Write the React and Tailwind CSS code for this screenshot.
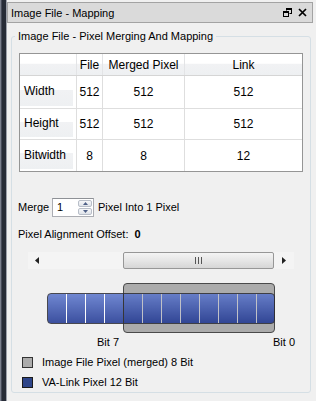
import React from "react";

const headerBg =
  "bg-[linear-gradient(to_bottom,#ffffff_0%,#ffffff_45%,#f1f2f4_46%,#eef0f2_100%)]";

const rows = [
  { label: "Width", file: "512", merged: "512", link: "512", h: "h-[33px]" },
  { label: "Height", file: "512", merged: "512", link: "512", h: "h-[31px]" },
  { label: "Bitwidth", file: "8", merged: "8", link: "12", h: "h-[31px]" },
];

const RestoreIcon = () => (
  <svg width="9" height="9" viewBox="0 0 9 9" className="block">
    <path d="M3 0h6v6h-2.5v-1h1.5v-3h-4v0.5h-1z" fill="#000" />
    <path d="M0 3h6v6h-6z M1 5v3h4v-3z" fill="#000" fillRule="evenodd" />
  </svg>
);

const CloseIcon = () => (
  <svg width="9" height="9" viewBox="0 0 9 9" className="block">
    <path d="M1 1L8 8M8 1L1 8" stroke="#000" strokeWidth="1.7" />
  </svg>
);

const SpinBox = () => (
  <div className="flex h-[19px] w-[42px] border border-[#abadb3] border-t-[#8e9196] bg-white">
    <div className="flex-1 pl-[4px] leading-[17px]">1</div>
    <div className="flex flex-col w-[15px] py-px pr-px gap-px">
      <div className="flex-1 flex items-center justify-center border border-[#b8bec8] rounded-[2px] bg-[linear-gradient(to_bottom,#f6f7f9,#dfe3e9)]">
        <svg width="5" height="3" viewBox="0 0 5 3">
          <path d="M0 3L2.5 0L5 3z" fill="#4d5f86" />
        </svg>
      </div>
      <div className="flex-1 flex items-center justify-center border border-[#b8bec8] rounded-[2px] bg-[linear-gradient(to_bottom,#f6f7f9,#dfe3e9)]">
        <svg width="5" height="3" viewBox="0 0 5 3">
          <path d="M0 0L2.5 3L5 0z" fill="#4d5f86" />
        </svg>
      </div>
    </div>
  </div>
);

const ScrollBar = () => (
  <div className="mx-[9px] h-[17px] flex bg-[#f4f4f4]">
    <div className="w-[17px] flex items-center justify-center">
      <svg width="4" height="7" viewBox="0 0 4 7">
        <path d="M4 0L0 3.5L4 7z" fill="#222" />
      </svg>
    </div>
    <div className="w-[78px]" />
    <div className="w-[151px] border border-[#979797] rounded-[2px] bg-[linear-gradient(to_bottom,#f4f4f4,#e6e6e6_50%,#d6d6d6)] flex items-center justify-center gap-[2px]">
      <div className="w-px h-[7px] bg-[#555]" />
      <div className="w-px h-[7px] bg-[#555]" />
      <div className="w-px h-[7px] bg-[#555]" />
    </div>
    <div className="flex-1 flex items-center justify-center">
      <svg width="4" height="7" viewBox="0 0 4 7">
        <path d="M0 0L4 3.5L0 7z" fill="#222" />
      </svg>
    </div>
  </div>
);

const BitDiagram = () => {
  const dividers = Array.from({ length: 11 }, (_, i) => i + 1);
  return (
    <div className="relative mt-[14px] h-[50px]">
      <div className="ml-[104px] w-[152px] h-[50px] rounded-[4px] border border-[#4a4a4a] bg-[#ababab]" />
      <div className="absolute left-[28px] top-[10px] w-[228px] h-[31px] rounded-[4px] border border-[#2b2b33] opacity-[0.85] bg-[linear-gradient(to_bottom,#5a75cc,#1d3592)] flex">
        {dividers.map((i) => (
          <div
            key={i}
            className={
              "w-[19px] h-full border-r " +
              (i < 4 ? "border-white" : i === 4 ? "border-[#333]" : "border-[#c4c6cc]")
            }
          />
        ))}
      </div>
    </div>
  );
};

export default function App() {
  return (
    <div className="w-[316px] h-[401px] overflow-hidden flex bg-[#f0f0f0] text-black font-['Liberation_Sans',Arial,sans-serif] text-[11px]">
      <div className="w-[7px] h-full bg-[linear-gradient(to_right,#7a7f8c_0px,#7a7f8c_1px,#454a58_1px,#454a58_2px,#272c37_2px,#272c37_6px,#9da1ab_6px)]" />
      <div className="flex-1 flex flex-col">
        <div className="h-[2px]" />
        <div className="h-[21px] mr-[3px] flex items-center justify-between pl-[3px] pr-[5px] bg-[#dadada] border border-[#a3a3a3]">
          <span className="leading-[14px]">Image File - Mapping</span>
          <div className="flex items-center gap-[6px]">
            <RestoreIcon />
            <CloseIcon />
          </div>
        </div>

        <fieldset className="mt-[6px] ml-[4px] w-[300px] border border-[#d5dfe5] rounded-[3px] px-[7px] pt-[10px] pb-[3px]">
          <legend className="-ml-[4px] px-[3px] leading-[14px]">
            Image File - Pixel Merging And Mapping
          </legend>

          <div className="border border-[#959595] bg-white text-[12px]">
            <div className="flex h-[22px] border-b border-[#d5d5d5]">
              <div className={"w-[57px] border-r border-[#e3e4e6] " + headerBg} />
              <div className={"w-[26px] border-r border-[#e3e4e6] flex items-center justify-center " + headerBg}>
                File
              </div>
              <div className={"w-[82px] border-r border-[#e3e4e6] flex items-center justify-center " + headerBg}>
                Merged Pixel
              </div>
              <div className={"flex-1 flex items-center justify-center " + headerBg}>
                Link
              </div>
            </div>
            {rows.map((r, idx) => (
              <div
                key={r.label}
                className={
                  "flex " + r.h + (idx < rows.length - 1 ? " border-b border-[#dedede]" : "")
                }
              >
                <div className="w-[57px] border-r border-[#dedede] flex pr-[3px] pb-[2px]">
                  <div className={"flex-1 flex items-center pl-[4px] " + headerBg}>
                    {r.label}
                  </div>
                </div>
                <div className="w-[26px] border-r border-[#dedede] flex items-center justify-center">
                  {r.file}
                </div>
                <div className="w-[82px] border-r border-[#dedede] flex items-center justify-center">
                  {r.merged}
                </div>
                <div className="flex-1 flex items-center justify-center">{r.link}</div>
              </div>
            ))}
          </div>

          <div className="mt-[26px] flex items-center h-[19px] -ml-px">
            <span className="w-[34px]">Merge</span>
            <SpinBox />
            <span className="ml-[4px]">Pixel Into 1 Pixel</span>
          </div>

          <div className="mt-[10px] leading-[14px] -ml-px flex">
            <span>Pixel Alignment Offset:</span>
            <span className="ml-[6px] font-bold">0</span>
          </div>

          <div className="mt-[11px]">
            <ScrollBar />
          </div>

          <BitDiagram />

          <div className="mt-[2px] flex leading-[14px]">
            <span className="ml-[78px] w-[22px]">Bit 7</span>
            <span className="ml-[154px]">Bit 0</span>
          </div>

          <div className="mt-[6px] flex items-center h-[14px]">
            <div className="ml-[3px] w-[11px] h-[11px] border border-[#333] bg-[#ababab]" />
            <span className="ml-[9px]">Image File Pixel (merged) 8 Bit</span>
          </div>
          <div className="mt-[6px] flex items-center h-[14px]">
            <div className="ml-[3px] w-[11px] h-[11px] border border-[#1a1a1a] bg-[#2e4589]" />
            <span className="ml-[9px]">VA-Link Pixel 12 Bit</span>
          </div>
        </fieldset>
      </div>
    </div>
  );
}
